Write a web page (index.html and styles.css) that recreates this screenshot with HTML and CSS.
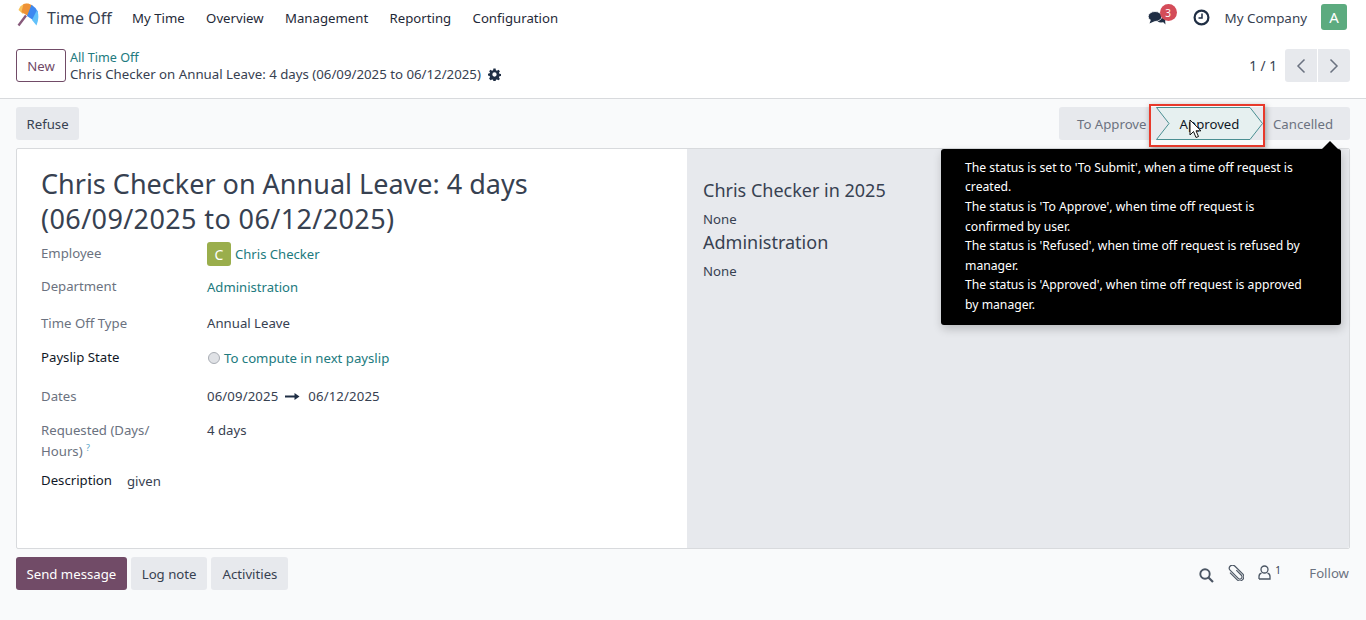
FILE: index.html
```html
<!DOCTYPE html>
<html lang="en">
<head>
<meta charset="utf-8">
<title>Time Off</title>
<link rel="stylesheet" href="styles.css">
</head>
<body>
<header class="topbar">
  <nav class="navbar">
    <svg class="logo" width="24" height="24" viewBox="0 0 24 24">
      <path d="M1.500 22.500 L9 12.500" stroke="#875a7b" stroke-width="2.400" fill="none"/>
      <path d="M1.500 7 Q3 2.500 7 1 L12 0.500 L6 11 Z" fill="#f9c35c"/>
      <path d="M6.500 1 Q11 -0.500 15.500 2.500 L11 13 L4.500 9 Z" fill="#ee9236"/>
      <path d="M14.500 1.800 Q19 4.500 21 9 L16 17 L10 13 Z" fill="#3d88f0"/>
      <path d="M20 7 Q23 14 19.500 22.500 L15 17 Z" fill="#62c1fa"/>
    </svg>
    <span class="brand">Time Off</span>
    <a class="menu">My Time</a>
    <a class="menu">Overview</a>
    <a class="menu">Management</a>
    <a class="menu">Reporting</a>
    <a class="menu">Configuration</a>
    <span class="spacer"></span>
    <span class="chat">
      <svg width="20" height="16" viewBox="0 0 20 16"><ellipse cx="13" cy="8.500" rx="5" ry="4" fill="#1f2e44"/><path d="M14 11 L17.500 14.500 L17 10Z" fill="#1f2e44"/><ellipse cx="7" cy="6.500" rx="6.800" ry="5" fill="#1f2e44" stroke="#fff" stroke-width="0.800"/><path d="M3 9.500 L1.500 13.500 L7.500 10.800Z" fill="#1f2e44"/></svg>
      <span class="badge">3</span>
    </span>
    <svg class="clock" width="17" height="17" viewBox="0 0 17 17"><circle cx="8.500" cy="8.500" r="6.900" fill="none" stroke="#1f2e44" stroke-width="2.200"/><path d="M9 4.500 V9 H5.500" fill="none" stroke="#1f2e44" stroke-width="1.500"/></svg>
    <span class="company">My Company</span>
    <span class="avatar">A</span>
  </nav>
  <div class="control">
    <button class="btn-new">New</button>
    <div class="crumbs">
      <a class="link crumb-link">All Time Off</a>
      <div class="crumb-title">Chris Checker on Annual Leave: 4 days (06/09/2025 to 06/12/2025)
        <svg class="gear" width="13" height="13" viewBox="0 0 24 24"><path fill="#1f2e44" fill-rule="evenodd" d="M10 1h4l.6 3.200 2 .8L19.300 3.200 22 5.900l-1.800 2.700.8 2 3 .6v3.600l-3 .6-.8 2 1.800 2.700-2.700 2.700-2.700-1.800-2 .8-.6 3.200h-4l-.6-3.200-2-.8-2.700 1.800L2 19.300l1.800-2.700-.8-2-3-.6v-3.600l3-.6.8-2L2 5.900l2.700-2.700L7.400 5l2-.8zM12 8a4 4 0 1 0 0 8 4 4 0 0 0 0-8z"/></svg>
      </div>
    </div>
    <span class="spacer"></span>
    <span class="pager">1 / 1</span>
    <div class="pager-btns">
      <button class="pg"><svg width="10" height="16" viewBox="0 0 10 16"><path d="M8.500 1.500 L2 8 L8.500 14.500" fill="none" stroke="#6b7280" stroke-width="1.500"/></svg></button>
      <button class="pg"><svg width="10" height="16" viewBox="0 0 10 16"><path d="M1.500 1.500 L8 8 L1.500 14.500" fill="none" stroke="#6b7280" stroke-width="1.500"/></svg></button>
    </div>
  </div>
</header>
<main class="content">
  <div class="statusrow">
    <button class="btn-grey">Refuse</button>
    <span class="spacer"></span>
    <div class="statusbar">
      <span class="st st-first">To Approve</span>
      <span class="st st-active">
        <svg class="st-shape" width="107" height="33" viewBox="0 0 107 33"><path d="M0.500 0.500 H94 L106.500 16.500 L94 32.500 H0.500 L13 16.500 Z" fill="#e6f0f0" stroke="#4a8f92" stroke-width="1"/></svg>
        <span class="st-label">Approved</span>
      </span>
      <span class="st st-last">Cancelled</span>
    </div>
  </div>
  <section class="sheet">
    <div class="left">
      <h1 class="title">Chris Checker on Annual Leave: 4 days <span class="title-dates">(06/09/2025 to 06/12/2025)</span></h1>
      <div class="field f-emp"><label class="lab">Employee</label><span class="val"><span class="emp-av">C</span><a class="link">Chris Checker</a></span></div>
      <div class="field f-dep"><label class="lab">Department</label><a class="val link">Administration</a></div>
      <div class="field f-typ"><label class="lab">Time Off Type</label><span class="val">Annual Leave</span></div>
      <div class="field f-pay"><label class="lab dark">Payslip State</label><span class="val"><span class="radio"></span><a class="link">To compute in next payslip</a></span></div>
      <div class="field f-dat"><label class="lab">Dates</label><span class="val">06/09/2025
        <svg class="arrow" width="15" height="9" viewBox="0 0 15 9"><path d="M0 4.500 H11" stroke="#1f2e44" stroke-width="2"/><path d="M9.500 1 L14.500 4.500 L9.500 8Z" fill="#1f2e44"/></svg>
        06/12/2025</span></div>
      <div class="field f-req"><label class="lab">Requested (Days/<br>Hours) <sup class="help">?</sup></label><span class="val">4 days</span></div>
      <div class="desc"><label class="lab dark">Description</label><span class="val">given</span></div>
    </div>
    <aside class="right">
      <h2 class="side-h first">Chris Checker in 2025</h2>
      <p class="side-p">None</p>
      <h2 class="side-h">Administration</h2>
      <p class="side-p">None</p>
    </aside>
  </section>
  <footer class="chatter">
    <button class="btn-send">Send message</button>
    <button class="btn-grey">Log note</button>
    <button class="btn-grey">Activities</button>
    <span class="spacer"></span>
    <svg class="ci ci-s" width="15" height="15" viewBox="0 0 15 15"><circle cx="6" cy="6" r="4.700" fill="none" stroke="#4b5563" stroke-width="1.900"/><path d="M9.500 9.500 L14 14" stroke="#4b5563" stroke-width="2.200"/></svg>
    <svg class="ci ci-c" width="16" height="16" viewBox="0 0 16 16"><g transform="rotate(-45 8 8)"><path d="M10.500 6 V14 A2.500 2.500 0 0 1 5.500 14 V1.500 A3.500 3.500 0 0 1 12.500 1.500 V14 A4.500 4.500 0 0 1 3.500 14 V3" fill="none" stroke="#4b5563" stroke-width="1.300" transform="translate(8 8) scale(.9) translate(-8 -8)"/></g></svg>
    <span class="followers"><svg width="13" height="15" viewBox="0 0 13 15"><circle cx="6.500" cy="4.500" r="3.500" fill="none" stroke="#4b5563" stroke-width="1.300"/><path d="M1 14 V11.500 Q1 8.800 3.500 8.200 M9.500 8.200 Q12 8.800 12 11.500 V14 H1" fill="none" stroke="#4b5563" stroke-width="1.300"/></svg><sup class="fcount">1</sup></span>
    <span class="follow">Follow</span>
  </footer>
</main>

<div class="redbox"></div>
<svg class="cursor" width="14" height="21" viewBox="0 0 14 21"><path d="M1 1 V16 L4.500 12.500 L7 18.500 L9.500 17.500 L7 11.800 H12 Z" fill="#fff" stroke="#111" stroke-width="1"/></svg>
<div class="tooltip">
  <span class="tip-arrow"></span>
  <p class="tip-line">The status is set to 'To Submit', when a time off request is created.</p>
  <p class="tip-line">The status is 'To Approve', when time off request is confirmed by user.</p>
  <p class="tip-line">The status is 'Refused', when time off request is refused by manager.</p>
  <p class="tip-line">The status is 'Approved', when time off request is approved by manager.</p>
</div>
</body>
</html>
```
FILE: styles.css
```css
* { box-sizing: border-box; }
html, body { margin: 0; padding: 0; height: 620px; overflow: hidden; }
body { background: #f9fafb; font-family: "Noto Sans", sans-serif; font-size: 13.2px; color: #374151; position: relative; }
button { font: inherit; cursor: pointer; }
h1, h2, p { margin: 0; font-weight: 400; }
.spacer { flex: 1; }
.link { color: #217a7e; }

.topbar { background: #fff; height: 99px; border-bottom: 1px solid #d8dadd; }
.navbar { height: 36px; display: flex; align-items: center; padding: 0 19px 0 16px; }
.logo { margin: -6px 0 0 1px; }
.brand { font-size: 16px; margin-left: 6px; margin-right: -1px; color: #374151; }
.menu { margin-left: 21.4px; color: #1f2937; }
.chat { position: relative; display: flex; margin-right: 25px; }
.badge { position: absolute; left: 12px; top: -6px; width: 17px; height: 17px; border-radius: 50%; background: #d44c59; color: #fff; font-size: 10px; display: flex; align-items: center; justify-content: center; }
.clock { margin-right: 15px; margin-top: -1px; }
.company { margin-right: 14px; color: #374151; font-size: 13.4px; }
.avatar { width: 26px; height: 26px; margin-top: -2px; border-radius: 3px; background: #5cab7f; color: #fff; font-size: 15px; display: flex; align-items: center; justify-content: center; }

.control { height: 62px; display: flex; align-items: flex-start; padding: 13px 16px 0; }
.btn-new { width: 50px; height: 33px; background: #fff; border: 1px solid #714b67; border-radius: 3px; color: #714b67; padding: 0; }
.crumbs { margin-left: 4px; line-height: 17px; }
.crumb-link { font-size: 12.6px; }
.crumb-title { color: #374151; display: flex; align-items: center; gap: 7px; font-size: 13.26px; }
.pager { margin-right: 8px; line-height: 30px; margin-top: 2px; font-size: 13.6px; }
.pager-btns { display: flex; gap: 1px; margin-top: 0; }
.pg { width: 32px; height: 33px; background: #e7e9ed; border: 0; display: flex; align-items: center; justify-content: center; border-radius: 3px 0 0 3px; padding: 0; }
.pg + .pg { border-radius: 0 3px 3px 0; }

.content { padding: 0 16px; }
.statusrow { height: 49px; display: flex; align-items: flex-start; padding-top: 8px; }
.statusrow .btn-grey { padding: 0 10.5px; }
.btn-grey { height: 33px; background: #e7e9ed; border: 0; border-radius: 3px; padding: 0 11px; color: #374151; }
.statusbar { display: flex; height: 33px; background: #e7e9ed; border-radius: 3px; color: #6b7280; }
.st { display: flex; align-items: center; height: 33px; }
.st-first { padding-left: 18px; width: 97px; }
.st-active { position: relative; width: 107px; justify-content: center; color: #111827; }
.st-shape { position: absolute; left: 0; top: 0; }
.st-label { position: relative; }
.st-last { width: 87px; padding-left: 10px; }

.sheet { height: 401px; display: flex; background: #fff; border: 1px solid #d8dadd; border-radius: 2px; }
.left { width: 670px; padding: 17px 24px 0; }
.title { font-size: 27px; line-height: 35px; color: #374151; width: 560px; }
.title-dates { letter-spacing: 0.38px; }
.field { display: flex; align-items: flex-start; }
.lab { width: 166px; flex: none; color: #6b7280; line-height: 21px; display: block; }
.lab.dark { color: #111827; }
.val { display: flex; align-items: center; line-height: 21px; }
.f-emp { margin-top: 7px; height: 33px; }
.f-emp .val { margin-top: -1px; font-size: 13.1px; }
.f-dep { height: 37px; }
.f-dep .val { margin-top: 1px; font-size: 13.1px; }
.f-typ { height: 34px; }
.f-pay { height: 39px; }
.f-pay .val { margin-top: 1px; }
.f-dat { height: 34px; }
.f-dat .val { letter-spacing: 0.12px; }
.f-req { height: 50px; }
.emp-av { width: 24px; height: 24px; border-radius: 3px; background: #9aae4c; color: #fff; display: flex; align-items: center; justify-content: center; font-size: 14px; margin-right: 4px; }
.radio { width: 12px; height: 12px; border-radius: 50%; background: #e0e2e6; border: 1px solid #a9adb4; margin: 0 4px 2px 1px; }
.arrow { margin: 0 8px 0 7px; }
.help { color: #5aa5c8; font-size: 9px; vertical-align: 5px; line-height: 0; }
.desc { display: flex; }
.desc .lab { width: 86px; }
.desc .val { margin-top: 1px; }
.right { flex: 1; background: #e7e9ed; padding: 29px 16px 0; border-radius: 0 2px 2px 0; }
.side-h { font-size: 18px; line-height: 25px; color: #374151; }
.side-p { line-height: 21px; margin-top: 6px; }
.chatter { display: flex; align-items: flex-start; height: 51px; gap: 4px; padding-top: 8px; }
.btn-send { height: 33px; background: #714b67; color: #fff; border: 0; border-radius: 3px; padding: 0 10.5px; }
.ci-s { margin: 11px 10px 0 0; }
.ci-c { margin: 8px 10px 0 0; }
.followers { display: flex; align-items: flex-start; width: 47px; margin-top: 8px; color: #374151; }
.fcount { font-size: 10px; margin: -2px 0 0 4px; line-height: 14px; vertical-align: baseline; }
.follow { color: #6b7280; line-height: 33px; margin-right: 1px; }

.redbox { position: absolute; left: 1149px; top: 104px; width: 116px; height: 43px; border: 2px solid #e8392b; box-shadow: 1px 2px 6px rgba(0,0,0,.35); }
.cursor { position: absolute; left: 1189px; top: 119px; }
.tooltip { position: absolute; left: 941px; top: 149px; width: 400px; height: 176px; background: #000; color: #fff; border-radius: 3px; padding: 8.8px 30px 9px 24px; font-size: 12.2px; line-height: 19.600px; box-shadow: 1px 4px 10px rgba(0,0,0,.2); }
.tip-arrow { position: absolute; left: 381px; top: -8px; width: 0; height: 0; border: 8px solid transparent; border-top: 0; border-bottom-color: #000; }
```
